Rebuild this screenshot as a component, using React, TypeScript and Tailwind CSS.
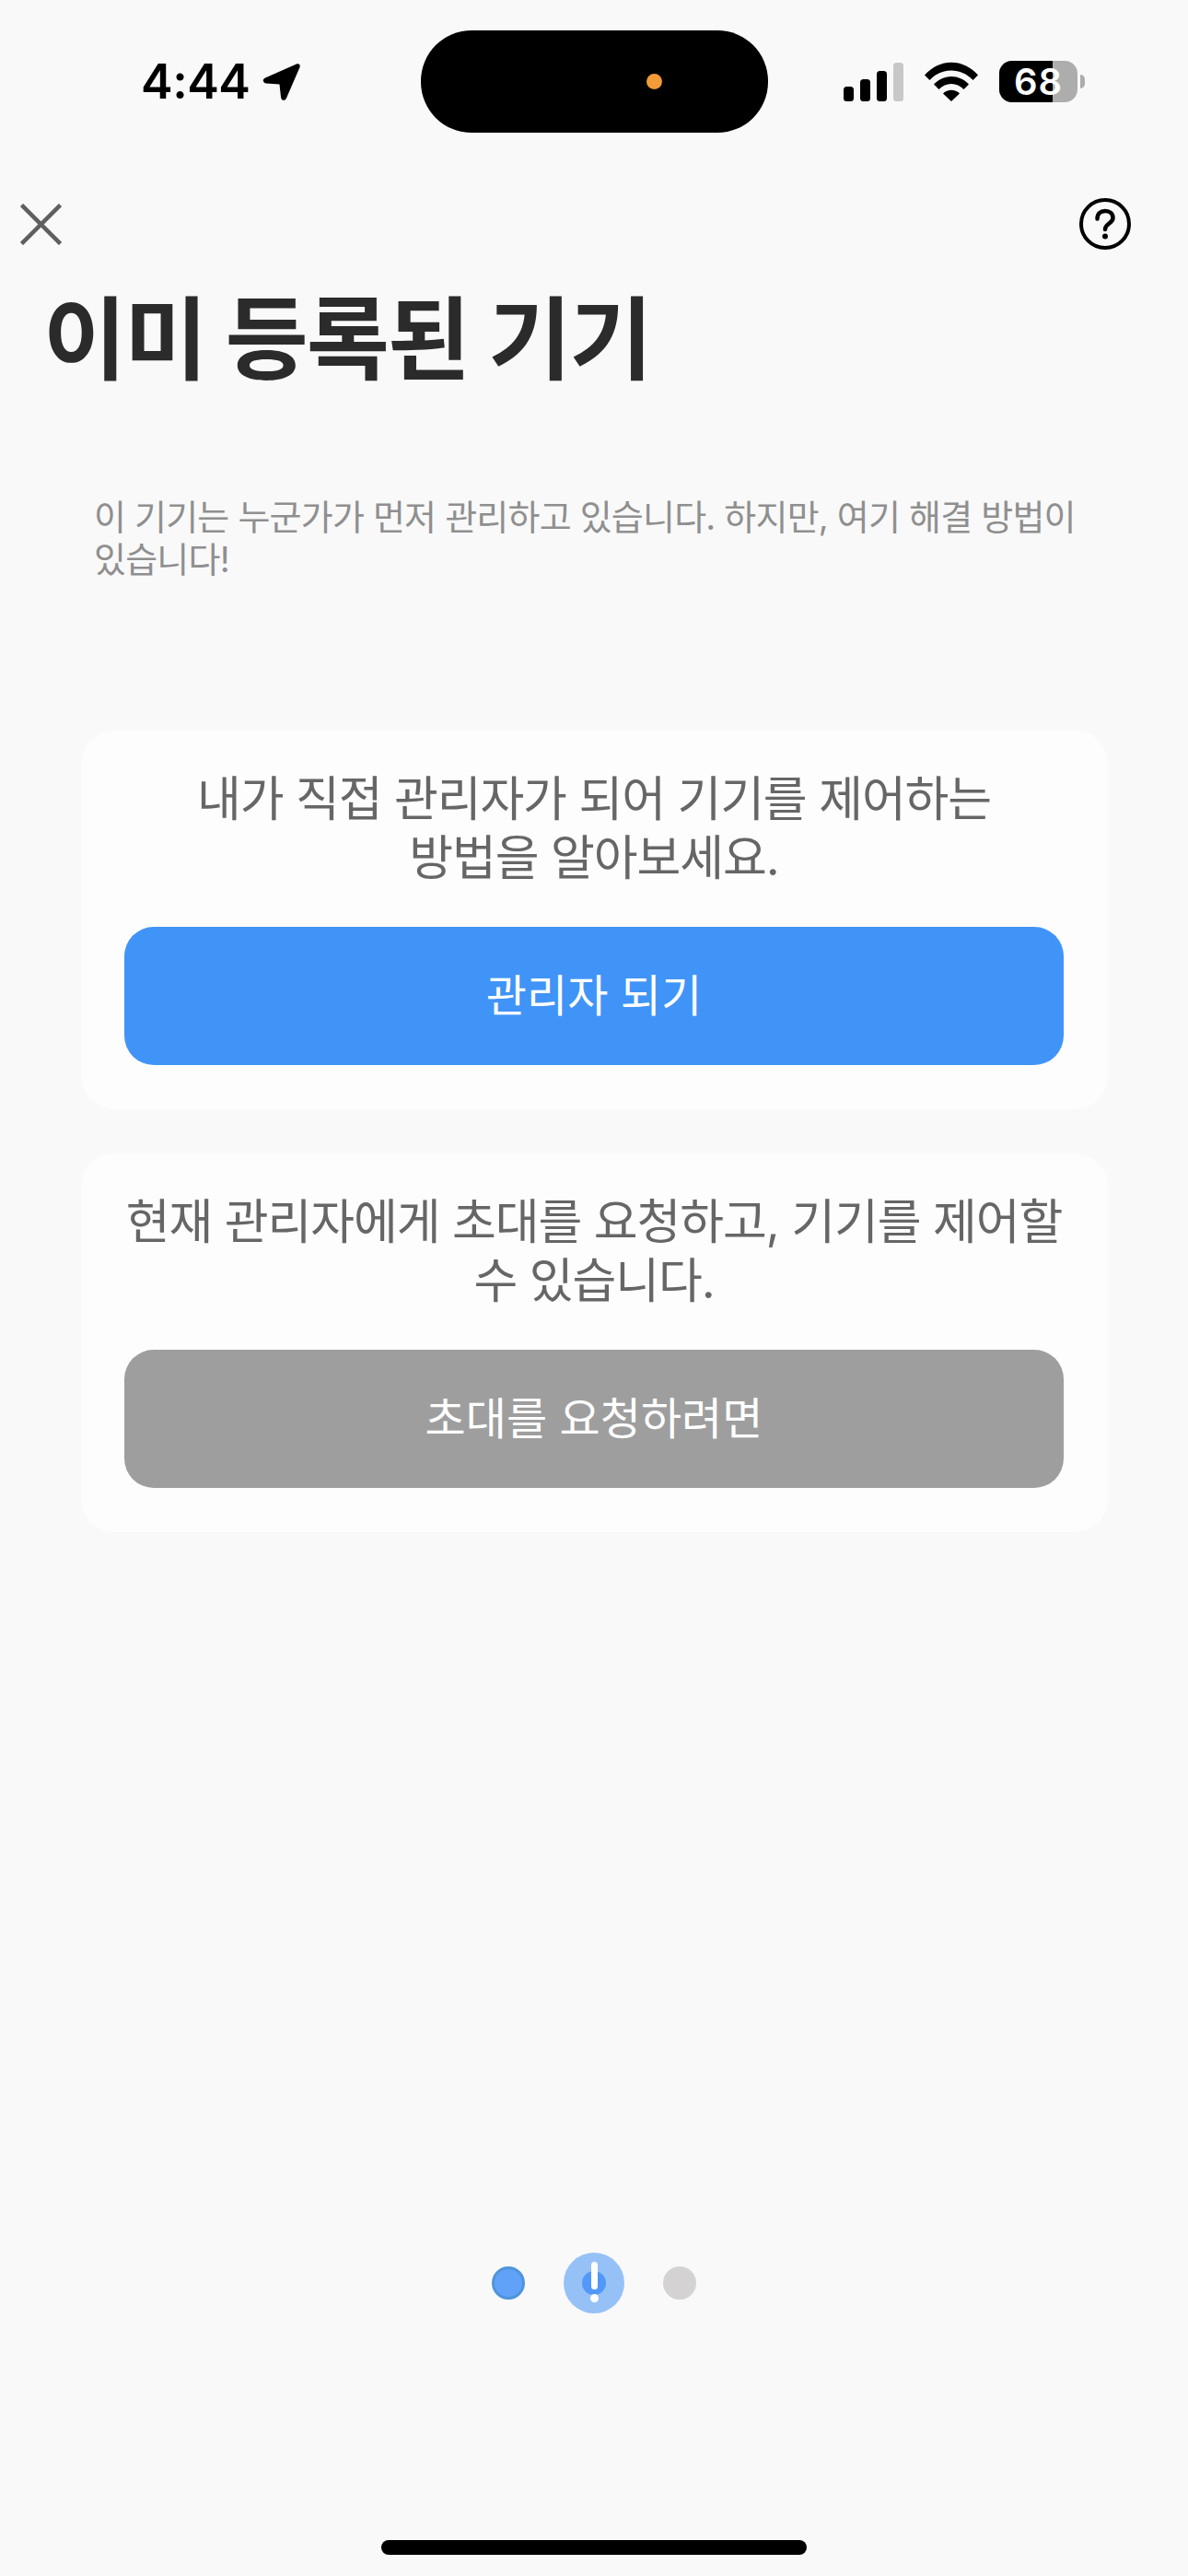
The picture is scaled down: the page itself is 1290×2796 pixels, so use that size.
const sans = "font-['Inter','Noto_Sans_CJK_KR',sans-serif]";

const StatusBar = () => (
  <div className="flex items-center pt-[33px] pl-[153px]">
    <span className="w-[117px] font-['Inter',sans-serif] text-[52px] leading-[52px] font-semibold tracking-[-0.5px] text-black whitespace-nowrap">
      4:44
    </span>
    <svg className="ml-[14px] h-[42px] w-[43px]" viewBox="0 0 43 42">
      <path
        d="M38 1.500 4 16.500C.5 18 1.500 22 5 22.500L19.500 23.500 21 37.500C21.500 41.500 25.500 42 27 38.500L41.500 5C42.500 2.500 40.500.5 38 1.500Z"
        fill="#000"
      />
    </svg>
    <div className="ml-[130px] flex h-[111px] w-[377px] items-center justify-end rounded-[55px] bg-black pr-[115px]">
      <div className="h-[17px] w-[17px] rounded-full bg-[#f29b38]" />
    </div>
    <svg className="ml-[82px] h-[42px] w-[65px]" viewBox="0 0 65 42">
      <rect x="0" y="26" width="11" height="16" rx="3.500" fill="#000" />
      <rect x="18" y="18" width="11" height="24" rx="3.500" fill="#000" />
      <rect x="36" y="9" width="11" height="33" rx="3.500" fill="#000" />
      <rect x="54" y="0" width="11" height="42" rx="3.500" fill="#c8c8c8" />
    </svg>
    <svg className="ml-[23px] h-[43px] w-[58px]" viewBox="0 0 58 43">
      <path d="M0 14.500C16-4 42-4 58 14.500L52.500 20C39.500 6 18.500 6 5.500 20Z" fill="#000" />
      <path d="M10 24.500C20.500 13 37.500 13 48 24.500L42.500 30C35 22 23 22 15.500 30Z" fill="#000" />
      <path d="M20 34.500C25 29.500 33 29.500 38 34.500L29 43Z" fill="#000" />
    </svg>
    <div className="relative ml-[23px] h-[45px] w-[85px] rounded-[14px] bg-[#adadad]">
      <div className="h-full w-[58px] rounded-l-[14px] bg-black" />
      <span className="absolute inset-0 flex items-center justify-center font-['Inter',sans-serif] text-[40px] leading-none font-semibold tracking-[1px] text-white">
        68
      </span>
    </div>
    <div className="ml-[3px] h-[15px] w-[5px] rounded-r-full bg-[#adadad]" />
  </div>
);

const ActionCard = ({
  lines,
  label,
  buttonClass,
}: {
  lines: string[];
  label: string;
  buttonClass: string;
}) => (
  <div className="rounded-[36px] bg-[#fdfdfd] pt-[43px] pr-[48px] pb-[48px] pl-[47px]">
    <p className="text-center text-[52px] leading-[64px] tracking-[-1.1px] text-[#666666]">
      {lines.map((line) => (
        <span key={line} className="block whitespace-nowrap">
          {line}
        </span>
      ))}
    </p>
    <button
      className={`mt-[42px] flex h-[150px] w-full items-center justify-center rounded-[32px] text-[48px] text-white ${buttonClass}`}
    >
      {label}
    </button>
  </div>
);

const Stepper = () => (
  <div className="mt-[782px] flex items-center justify-center gap-[42px]">
    <div className="h-[36px] w-[36px] rounded-full border-[3px] border-[#4f94dd] bg-[#5fa2f8]" />
    <div className="relative flex h-[66px] w-[66px] items-center justify-center rounded-full bg-[#96c1f7]">
      <div className="h-[26px] w-[26px] rounded-full bg-[#5298f8]" />
      <div className="absolute top-[10px] left-[30px] h-[30px] w-[7px] rounded-full bg-white" />
      <div className="absolute top-[45px] left-[29px] h-[9px] w-[9px] rounded-full bg-white" />
    </div>
    <div className="h-[36px] w-[36px] rounded-full bg-[#d4d2d2]" />
  </div>
);

export default function App() {
  return (
    <div className={`h-[2796px] w-[1290px] overflow-hidden bg-[#f9f9f9] ${sans}`}>
      <StatusBar />

      <div className="mt-[71px] flex items-center justify-between pr-[62px] pl-[22px]">
        <svg className="h-[45px] w-[45px]" viewBox="0 0 45 45">
          <path d="M1.500 1.500 43.500 43.500M43.500 1.500 1.500 43.500" stroke="#5f5f5f" strokeWidth="4.500" fill="none" />
        </svg>
        <svg className="h-[56px] w-[56px]" viewBox="0 0 56 56">
          <circle cx="28" cy="28" r="26" stroke="#000" strokeWidth="4" fill="none" />
          <path
            d="M19.500 22.500C19.500 17 23 14 28 14C33 14 36.500 17 36.500 21.500C36.500 27.500 28 27.500 28 34"
            stroke="#000"
            strokeWidth="4.500"
            strokeLinecap="round"
            fill="none"
          />
          <circle cx="28" cy="41.500" r="3" fill="#000" />
        </svg>
      </div>

      <h1 className="mt-[38px] pl-[47px] text-[98px] leading-[120px] font-bold tracking-[-2px] whitespace-nowrap text-[#2b2b2b]">
        이미 등록된 기기
      </h1>

      <p className="mt-[109px] pl-[102px] text-[38px] leading-[46px] tracking-[-0.8px] text-[#8f8f8f]">
        <span className="block whitespace-nowrap">이 기기는 누군가가 먼저 관리하고 있습니다. 하지만, 여기 해결 방법이</span>
        <span className="block whitespace-nowrap">있습니다!</span>
      </p>

      <div className="mt-[163px] flex flex-col gap-[48px] pr-[87px] pl-[88px]">
        <ActionCard
          lines={["내가 직접 관리자가 되어 기기를 제어하는", "방법을 알아보세요."]}
          label="관리자 되기"
          buttonClass="bg-[#4094f7]"
        />
        <ActionCard
          lines={["현재 관리자에게 초대를 요청하고, 기기를 제어할", "수 있습니다."]}
          label="초대를 요청하려면"
          buttonClass="bg-[#9e9e9e]"
        />
      </div>

      <Stepper />

      <div className="mx-auto mt-[246px] h-[16px] w-[462px] rounded-full bg-black" />
    </div>
  );
}
